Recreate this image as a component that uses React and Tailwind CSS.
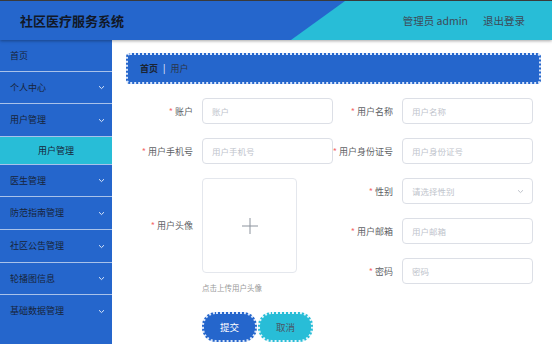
import React from "react";

const font = { fontFamily: '"Noto Sans CJK SC", "Noto Sans", sans-serif' };

function Chevron({ className = "" }) {
  return (
    <svg width="7" height="5" viewBox="0 0 7 5" className={className}>
      <path d="M1 1.2 L3.5 3.6 L6 1.2" fill="none" stroke="currentColor" strokeWidth="1" />
    </svg>
  );
}

const menu = [
  { name: "首页", h: "h-[32px]", arrow: false },
  { name: "个人中心", h: "h-[32px]", arrow: true },
  { name: "用户管理", h: "h-[33px]", arrow: true, sub: "用户管理" },
  { name: "医生管理", h: "h-[32px]", arrow: true },
  { name: "防范指南管理", h: "h-[33px]", arrow: true },
  { name: "社区公告管理", h: "h-[33px]", arrow: true },
  { name: "轮播图信息", h: "h-[32px]", arrow: true },
  { name: "基础数据管理", h: "h-[32px]", arrow: true, last: true },
];

function Label({ text, w }) {
  return (
    <div className={`${w} flex shrink-0 items-center justify-end whitespace-nowrap pr-[9px] text-[9px] leading-none text-[#606266]`}>
      <span className="mr-[2px] text-[#f56c6c]">*</span>
      <span>{text}</span>
    </div>
  );
}

function Field({ label, placeholder, w = "w-[70px]", select = false }) {
  return (
    <div className="flex h-[26px] items-center">
      <Label text={label} w={w} />
      <div className="flex h-[26px] w-[131px] items-center justify-between rounded-[4px] border border-[#dcdfe6] bg-white pl-[9px] pr-[8px]">
        <span className="text-[8.5px] leading-none text-[#c0c4cc]">{placeholder}</span>
        {select && <Chevron className="text-[#c0c4cc]" />}
      </div>
    </div>
  );
}

export default function App() {
  return (
    <div className="flex h-[344px] w-[552px] flex-col overflow-hidden bg-white" style={font}>
      {/* Header */}
      <header className="relative z-10 flex h-[40px] shrink-0 items-center justify-between border-t border-[#3a3a3a] bg-[#2566cc] shadow-[0_1px_3px_rgba(0,0,0,0.35)]">
        <svg className="absolute inset-0" width="552" height="39" viewBox="0 0 552 39">
          <polygon points="345,0 552,0 552,39 291,39" fill="#28bdd7" />
        </svg>
        <div className="relative pl-[20px] text-[13px] font-bold text-[#111827]">社区医疗服务系统</div>
        <div className="relative flex items-center gap-[15px] pr-[27px] text-[10.5px] text-[#3d4a57]">
          <span>管理员 admin</span>
          <span>退出登录</span>
        </div>
      </header>

      <div className="flex min-h-0 flex-1">
        {/* Sidebar */}
        <aside className="w-[112px] shrink-0 bg-[#2566cc]">
          {menu.map((m) => (
            <div key={m.name}>
              <div
                className={`flex ${m.h} items-center justify-between pl-[10px] pr-[7px] text-[9px] text-[#17243a] ${
                  m.last ? "" : "border-b border-[#a9c2ea]"
                }`}
              >
                <span>{m.name}</span>
                {m.arrow && <Chevron className="text-[#dbe7fa]" />}
              </div>
              {m.sub && (
                <div className="flex h-[28px] items-center justify-center border-b border-[#a9c2ea] bg-[#28bdd7] text-[9px] text-[#17243a]">
                  {m.sub}
                </div>
              )}
            </div>
          ))}
        </aside>

        {/* Main */}
        <main className="flex-1 pl-[14px] pr-[11px] pt-[13px]">
          <div className="flex h-[31px] items-center rounded-[4px] border-2 border-dotted border-[#d9e6fb] bg-[#2566cc] pl-[12px] text-[9px]">
            <span className="font-bold text-[#1b2433]">首页</span>
            <span className="mx-[5px] text-white">|</span>
            <span className="text-[#2b3445]">用户</span>
          </div>

          <div className="ml-[6px] mt-[14px] flex">
            {/* left column */}
            <div className="flex w-[201px] flex-col gap-[14px]">
              <Field label="账户" placeholder="账户" />
              <Field label="用户手机号" placeholder="用户手机号" />
              <div>
                <div className="flex items-center">
                  <Label text="用户头像" w="w-[70px]" />
                  <div className="flex h-[95px] w-[95px] items-center justify-center rounded-[4px] border border-[#e4e7ed]">
                    <svg width="16" height="16" viewBox="0 0 16 16">
                      <path d="M8 0 V16 M0 8 H16" stroke="#8c939d" strokeWidth="1" />
                    </svg>
                  </div>
                </div>
                <div className="ml-[70px] mt-[11px] text-[7.5px] leading-[8px] text-[#9a9a9a]">点击上传用户头像</div>
                <div className="ml-[70px] mt-[20px] flex gap-[1px]">
                  <button className="h-[30px] w-[55px] rounded-[14px] border-2 border-dotted border-[#d9e6fb] bg-[#2566cc] text-[9.5px] text-white">
                    提交
                  </button>
                  <button className="h-[30px] w-[55px] rounded-[14px] border-2 border-dotted border-[#dff5fa] bg-[#28bdd7] text-[9.5px] text-[#4b5563]">
                    取消
                  </button>
                </div>
              </div>
            </div>

            {/* right column */}
            <div className="flex w-[200px] flex-col gap-[14px]">
              <Field label="用户名称" placeholder="用户名称" w="w-[69px]" />
              <Field label="用户身份证号" placeholder="用户身份证号" w="w-[69px]" />
              <Field label="性别" placeholder="请选择性别" w="w-[69px]" select />
              <Field label="用户邮箱" placeholder="用户邮箱" w="w-[69px]" />
              <Field label="密码" placeholder="密码" w="w-[69px]" />
            </div>
          </div>
        </main>
      </div>
    </div>
  );
}
